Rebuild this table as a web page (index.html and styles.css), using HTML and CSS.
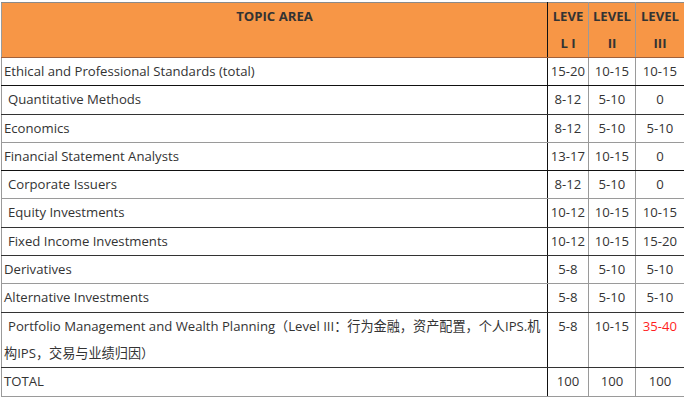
FILE: index.html
```html
<!DOCTYPE html>
<html lang="zh-CN">
<head>
<meta charset="utf-8">
<title>CFA Topic Area Weights</title>
<link rel="stylesheet" href="styles.css">
</head>
<body>
<table class="weights">
  <colgroup>
    <col class="c-topic">
    <col class="c-l1">
    <col class="c-l2">
    <col class="c-l3">
  </colgroup>
  <thead>
    <tr class="head">
      <th class="topic-h">TOPIC AREA</th>
      <th class="lvl">LEVE<br>L I</th>
      <th class="lvl">LEVEL<br>II</th>
      <th class="lvl">LEVEL<br>III</th>
    </tr>
  </thead>
  <tbody>
    <tr class="dk"><td class="topic">Ethical and Professional Standards (total)</td><td>15-20</td><td>10-15</td><td>10-15</td></tr>
    <tr class="md"><td class="topic ind">Quantitative Methods</td><td>8-12</td><td>5-10</td><td>0</td></tr>
    <tr class="lt"><td class="topic">Economics</td><td>8-12</td><td>5-10</td><td>5-10</td></tr>
    <tr class="dk"><td class="topic">Financial Statement Analysts</td><td>13-17</td><td>10-15</td><td>0</td></tr>
    <tr class="lt"><td class="topic ind">Corporate Issuers</td><td>8-12</td><td>5-10</td><td>0</td></tr>
    <tr class="md"><td class="topic ind">Equity Investments</td><td>10-12</td><td>10-15</td><td>10-15</td></tr>
    <tr class="md"><td class="topic ind">Fixed Income Investments</td><td>10-12</td><td>10-15</td><td>15-20</td></tr>
    <tr class="lt"><td class="topic">Derivatives</td><td>5-8</td><td>5-10</td><td>5-10</td></tr>
    <tr class="md"><td class="topic">Alternative Investments</td><td>5-8</td><td>5-10</td><td>5-10</td></tr>
    <tr class="md"><td class="topic ind">Portfolio Management and Wealth Planning（Level III：行为金融，资产配置，个人IPS.机构IPS，交易与业绩归因）</td><td>5-8</td><td>10-15</td><td class="hot">35-40</td></tr>
    <tr class="lt"><td class="topic">TOTAL</td><td>100</td><td>100</td><td>100</td></tr>
  </tbody>
</table>
</body>
</html>
```
FILE: styles.css
```css
html, body {
  margin: 0;
  padding: 0;
  background: #ffffff;
}
body {
  padding: 2px 0 0 1px;
  font-family: "Open Sans", "Noto Sans CJK SC", sans-serif;
  font-size: 13.15px;
  color: #333333;
}
.weights {
  border-collapse: collapse;
  table-layout: fixed;
  width: 683px;
}
.c-topic { width: 546px; }
.c-l1 { width: 41px; }
.c-l2 { width: 47px; }
.c-l3 { width: 49px; }

.weights th,
.weights td {
  border: 1px solid #9a9a9a;
  padding: 0;
  vertical-align: top;
  line-height: 27.3px;
  text-align: center;
  white-space: normal;
}
.weights th:first-child,
.weights td:first-child {
  border-right-color: #111111;
}
.head th {
  background: #f79646;
  font-weight: bold;
  color: #333333;
  line-height: 27px;
  border-bottom-color: #a0603a;
  border-top-color: #8a8a8a;
}
.head th.lvl {
  border-left-color: #6b4a35;
}
.head th:first-child {
  border-right-color: #111111;
}
.weights td.topic {
  text-align: left;
  padding-left: 2px;
}
.weights td.ind {
  text-indent: 4px;
}
tr.dk td { border-bottom-color: #111111; }
tr.md td { border-bottom-color: #333333; }
tr.lt td { border-bottom-color: #9a9a9a; }
td.hot { color: #ff1f1f; }
```
